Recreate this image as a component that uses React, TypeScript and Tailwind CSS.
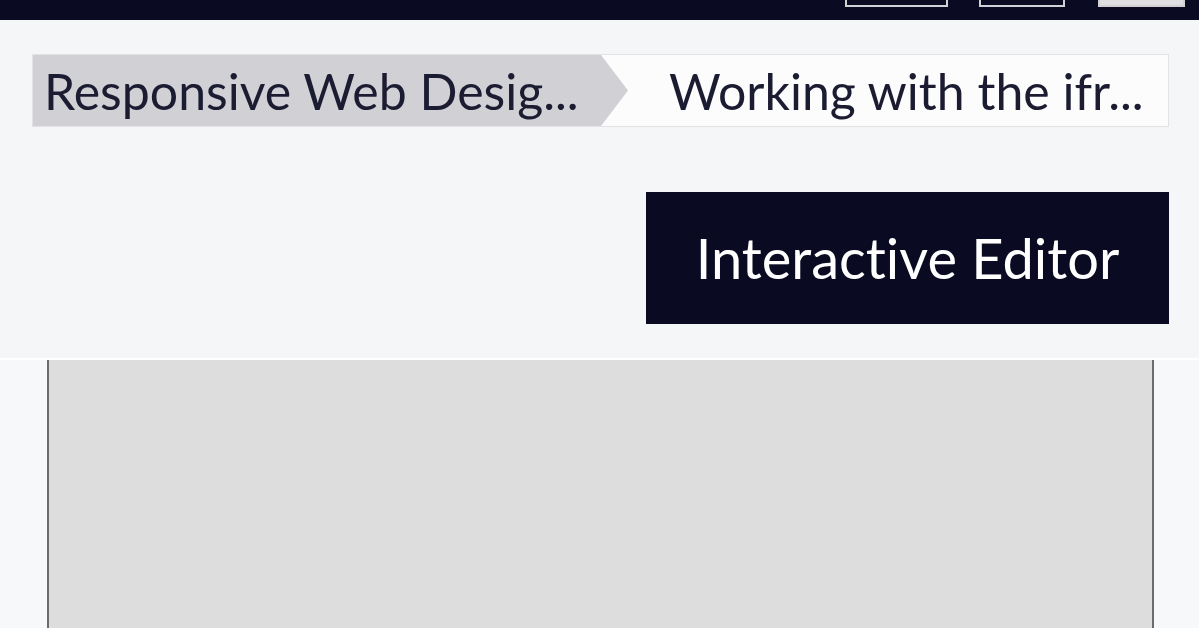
export default function App() {
  return (
    <div className="min-h-[628px] bg-[#f5f6f7] font-['Lato','Noto_Sans',sans-serif] text-[#1b1b32] [font-variant-ligatures:none] [font-feature-settings:'liga'_0,'clig'_0]">
      {/* top nav, mostly scrolled off */}
      <nav className="flex h-[20px] items-end justify-end overflow-hidden bg-[#0a0a23] pb-[13px] pr-[14px]">
        <div className="h-[30px] w-[103px] border-2 border-[#d0d0d5]" />
        <div className="ml-[31px] h-[30px] w-[86px] border-2 border-[#d0d0d5]" />
        <div className="ml-[33px] h-[30px] w-[87px] border-2 border-[#d0d0d5] bg-[#dfdfe2]" />
      </nav>

      <header className="border-b-2 border-white pb-[34px] pl-[32px] pr-[30px] pt-[34px]">
        <div className="flex h-[73px] border border-[#e3e3e6] bg-[#fcfcfc] text-[50px] leading-none">
          <div className="flex w-[595px] shrink-0 items-center bg-[#d0d0d5] pl-[11px] [clip-path:polygon(0_0,calc(100%-27px)_0,100%_50%,calc(100%-27px)_100%,0_100%)]">
            <span className="whitespace-nowrap">Responsive Web Desig...</span>
          </div>
          <div className="flex flex-1 items-center pl-[41px]">
            <span className="whitespace-nowrap">Working with the ifr...</span>
          </div>
        </div>
        <div className="mt-[65px] flex justify-end">
          <button className="flex h-[132px] w-[523px] items-center justify-center bg-[#0a0a23] text-[56px] leading-none text-white [font-variant-ligatures:none] [font-feature-settings:'liga'_0,'clig'_0]">
            Interactive Editor
          </button>
        </div>
      </header>

      <div className="bg-[#f7f8f9] pl-[47px] pr-[45px]">
        <div className="h-[268px] border-x-2 border-[#6b6b6b] bg-[#dddddd]" />
      </div>
    </div>
  );
}
